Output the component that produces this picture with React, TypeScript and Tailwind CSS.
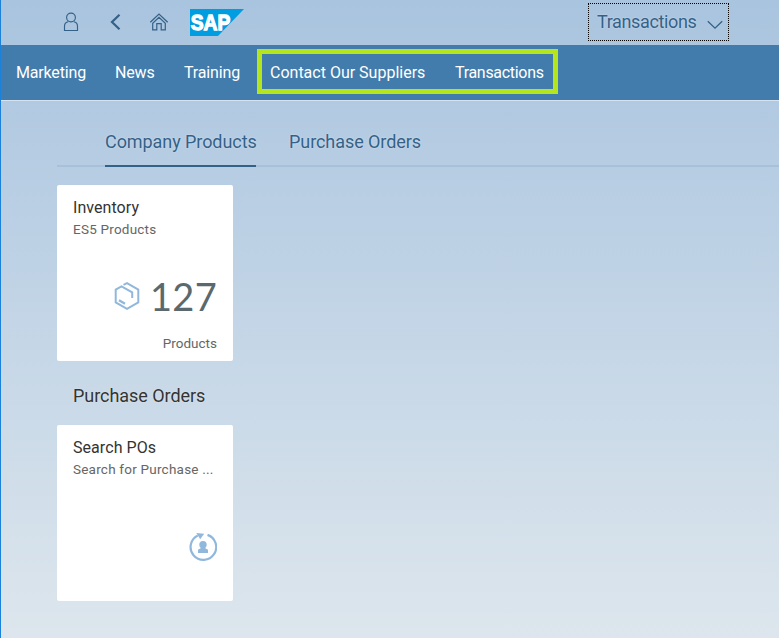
import type { ReactNode } from "react";

const sans = "font-['Roboto','Liberation_Sans',sans-serif]";

function UserIcon() {
  return (
    <svg className="h-5 w-4" viewBox="0 0 16 20" fill="none" stroke="#346187" strokeWidth="1.15">
      <circle cx="8" cy="5.5" r="4.4" />
      <path d="M5.3 9.7 C2.8 10 1.5 12 1.5 14.3 V18.5 H14.5 V14.3 C14.5 12 13.2 10 10.7 9.7" />
    </svg>
  );
}

function BackIcon() {
  return (
    <svg className="h-5 w-4" viewBox="0 0 16 20" fill="none" stroke="#346187" strokeWidth="2.2">
      <path d="M12.5 2.8 L5 10 L12.5 17.2" />
    </svg>
  );
}

function HomeIcon() {
  return (
    <svg className="h-5 w-5" viewBox="0 0 20 20" fill="none" stroke="#346187" strokeWidth="1.2">
      <path d="M1.3 10.2 L10 2 L18.7 10.2" />
      <path d="M3.7 11.2 V17.9 H7.8 V11.7 H12.2 V17.9 H16.3 V11.2 L10 5.3 Z" />
    </svg>
  );
}

function SapLogo() {
  return (
    <svg className="h-[27px] w-[54px]" viewBox="0 0 54 27">
      <path d="M0 0 H54 L28 27 H0 Z" fill="#009de0" />
      <text x="0.8" y="21.2" textLength="39.5" lengthAdjust="spacingAndGlyphs" fill="#fff" stroke="#fff" strokeWidth="1.3" className="font-['Liberation_Sans',sans-serif] text-[22px] font-bold">
        SAP
      </text>
    </svg>
  );
}

function ProductIcon() {
  return (
    <svg className="h-[28px] w-[26px]" viewBox="0 0 26 28" fill="none" stroke="#91b8dc" strokeWidth="2">
      <path d="M9.5 2.8 L13 1.2 L24.3 7.6 V20.4 L13 26.8 L1.7 20.4 V7.6 L7.5 4.4 L18.2 10.3 V16" />
      <path d="M5 18.3 L11 21.7" strokeWidth="2.4" />
    </svg>
  );
}

function SearchPoIcon() {
  return (
    <svg className="h-[28px] w-[28px]" viewBox="0 0 28 28">
      <path d="M18.5 1.9 A12.8 12.8 0 1 1 8.8 2.5" fill="none" stroke="#91b8dc" strokeWidth="2.2" />
      <path d="M7.3 0 L15.2 .7 L11.2 6.3 Z" fill="#91b8dc" />
      <circle cx="14" cy="11.8" r="3.7" fill="#91b8dc" />
      <path d="M12 13 H16 V15 L19 16.8 V20 H9 V16.8 L12 15 Z" fill="#91b8dc" />
    </svg>
  );
}

function Tile({ title, subtitle, children }: { title: string; subtitle: string; children: ReactNode }) {
  return (
    <article className="flex h-44 w-44 flex-col rounded-[2px] bg-white px-4 pt-[13px]">
      <h3 className="text-[16px] leading-5 tracking-[0.06px] text-[#333]">{title}</h3>
      <p className="mt-px text-[13.5px] leading-5 tracking-[0.22px] whitespace-nowrap text-[#666]">{subtitle}</p>
      {children}
    </article>
  );
}

export default function App() {
  return (
    <div className={`${sans} h-[638px] w-[779px] overflow-hidden border-l border-[#1c82d9] bg-linear-to-b from-[#a9c4df] to-[#dde6ed]`}>
      <header className="flex h-[45px] items-start pl-[62px]">
        <div className="mt-3"><UserIcon /></div>
        <div className="mt-3 ml-7"><BackIcon /></div>
        <div className="mt-3 ml-[26px]"><HomeIcon /></div>
        <div className="mt-[9px] ml-[21px]"><SapLogo /></div>
        <button className="mt-[3px] ml-[344px] flex h-[38px] w-[141px] items-center border border-dotted border-black pb-0.5 pl-2 text-[18px] tracking-[-0.36px] text-[#346187] [text-shadow:0_0_2px_#ffffff80]">
          Transactions
          <svg className="mt-2 ml-2.5 h-3 w-4 shrink-0" viewBox="0 0 16 12" fill="none" stroke="#346187" strokeWidth="1.3">
            <path d="M.8 2.2 L8 9.2 L15.2 2.2" />
          </svg>
        </button>
      </header>
      <nav className="flex h-[55px] items-start bg-[#427cac] text-[16px] text-white">
        <a className="mt-4 ml-[15px] w-[99px] leading-6 tracking-[-0.17px]">Marketing</a>
        <a className="mt-4 w-[69px] leading-6 tracking-[-0.15px]">News</a>
        <a className="mt-4 w-[73px] leading-6 tracking-[-0.15px]">Training</a>
        <div className="mt-1 flex h-[45px] w-[301px] border-5 border-[#b5e61d] pt-[7px] pl-2 whitespace-nowrap">
          <a className="w-[185px] leading-6">Contact Our Suppliers</a>
          <a className="leading-6 tracking-[-0.3px]">Transactions</a>
        </div>
      </nav>
      <main className="border-t border-[#d7e4f0] pl-14">
        <div className="flex h-[66px] gap-[33px] border-b-2 border-[#a8c1db] pl-12 text-[18px] tracking-[-0.07px] text-[#346187] [text-shadow:0_0_2px_#ffffff80]">
          <a className="-mb-0.5 h-[66px] w-[151px] border-b-2 border-[#346187] pt-[29px] leading-6 whitespace-nowrap">Company Products</a>
          <a className="pt-[29px] leading-6">Purchase Orders</a>
        </div>
        <section className="pt-[18px]">
          <Tile title="Inventory" subtitle="ES5 Products">
            <div className="mt-[33px] flex h-12 items-center justify-end">
              <ProductIcon />
              <span className="ml-[10px] font-['Lato',sans-serif] text-[38px] leading-[48px] tracking-[0.3px] text-[#5a696e]">127</span>
            </div>
            <p className="mt-[13px] text-right text-[13.5px] leading-5 text-[#666]">Products</p>
          </Tile>
        </section>
        <h2 className="mt-[23px] pl-4 text-[18px] leading-6 tracking-[-0.05px] text-[#333] [text-shadow:0_0_2px_#ffffff80]">Purchase Orders</h2>
        <section className="mt-[17px]">
          <Tile title="Search POs" subtitle="Search for Purchase ...">
            <div className="mt-[54px] flex justify-end"><SearchPoIcon /></div>
          </Tile>
        </section>
      </main>
    </div>
  );
}
